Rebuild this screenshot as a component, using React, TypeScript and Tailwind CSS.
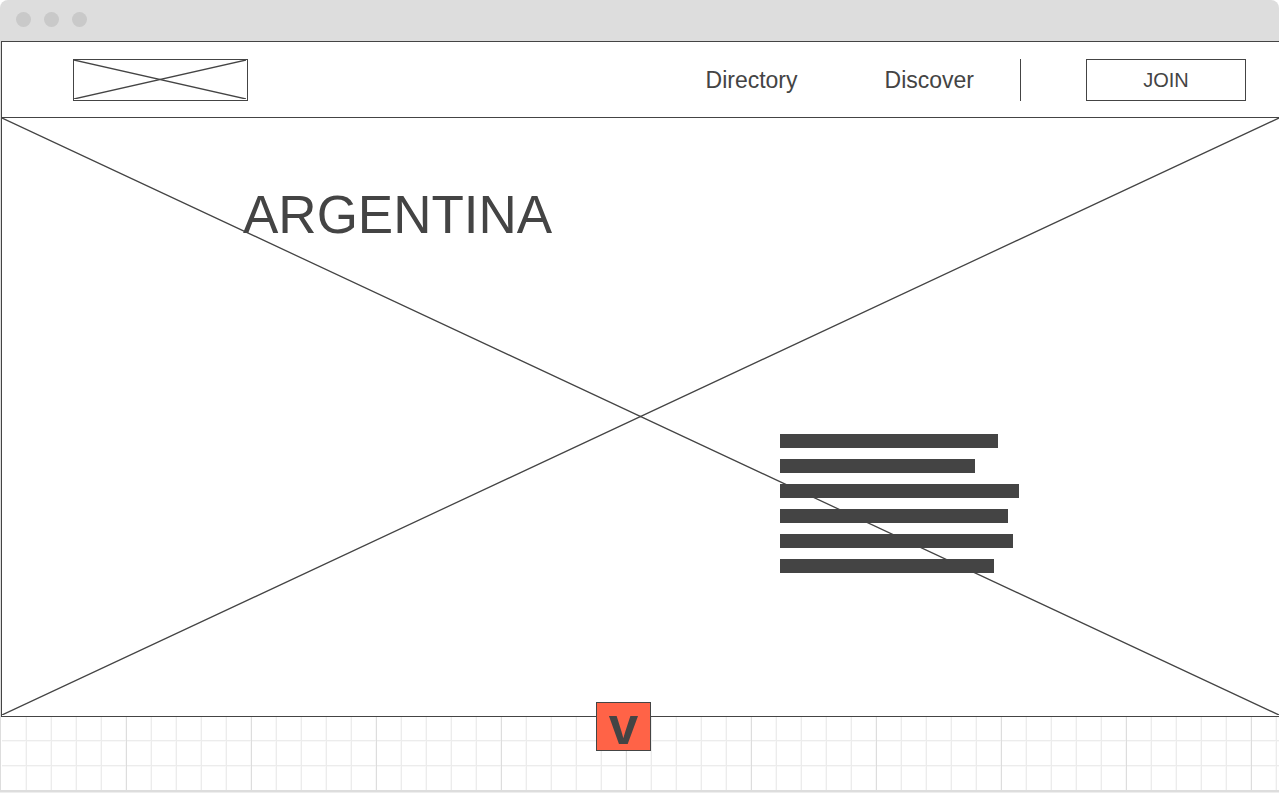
import React from "react";

const bars = [
  "w-[218px]",
  "w-[195px]",
  "w-[239px]",
  "w-[228px]",
  "w-[233px]",
  "w-[214px]",
];

function Cross({ size }: { size: string }) {
  return (
    <svg
      className={`absolute top-0 left-0 ${size}`}
      viewBox="0 0 100 100"
      preserveAspectRatio="none"
      aria-hidden="true"
    >
      <path
        d="M0 0L100 100M0 100L100 0"
        stroke="#444"
        strokeWidth="1.3"
        fill="none"
        vectorEffect="non-scaling-stroke"
      />
    </svg>
  );
}

function Grid() {
  return (
    <svg className="block h-[73px] w-full" aria-hidden="true">
      <defs>
        <pattern id="minor" width="25" height="25" x="0" y="-2" patternUnits="userSpaceOnUse">
          <path d="M24 0h1v25h-1zM0 1h25v1h-25z" fill="#f8f8f8" />
          <path d="M0 0h1v25h-1zM0 0h25v1h-25z" fill="#ececec" />
        </pattern>
        <pattern id="major" width="125" height="125" x="0" y="-2" patternUnits="userSpaceOnUse">
          <path d="M0 0h1v125h-1z" fill="#ddd" />
        </pattern>
      </defs>
      <rect x="1" width="100%" height="100%" fill="url(#minor)" />
      <rect x="1" width="100%" height="100%" fill="url(#major)" />
    </svg>
  );
}

export default function App() {
  return (
    <div className="overflow-hidden bg-white font-['Liberation_Sans',Arial,sans-serif] text-[#444]">
      <div className="flex h-[41px] items-center gap-[13px] rounded-t-lg bg-[#ddd] px-4 pb-0.5">
        <span className="size-[15px] rounded-full bg-[#c9c9c9]" />
        <span className="size-[15px] rounded-full bg-[#c9c9c9]" />
        <span className="size-[15px] rounded-full bg-[#c9c9c9]" />
      </div>
      <div className="border-b-2 border-l border-[#ddd]">
        <header className="flex h-[77px] items-center border-y border-l border-[#444] pr-[33px] pl-[71px]">
          <a
            href="#home"
            aria-label="Home"
            className="relative h-[42px] w-[175px] border border-[#444]"
          >
            <Cross size="h-[calc(100%-1px)] w-[calc(100%-1px)]" />
          </a>
          <nav className="ml-auto flex items-center text-[23px] leading-7">
            <a href="#directory">Directory</a>
            <a href="#discover" className="ml-[87px]">Discover</a>
          </nav>
          <span className="ml-[46px] h-[42px] w-px bg-[#444]" />
          <button className="ml-[65px] h-[42px] w-[160px] border border-[#444] text-xl">
            JOIN
          </button>
        </header>
        <main className="relative h-[599px] border-b border-l border-[#444]">
          <Cross size="h-[calc(100%-1px)] w-full" />
          <div className="relative flex h-full flex-col pt-[67px]">
            <h1 className="pl-[241px] text-[53px] leading-[60px]">ARGENTINA</h1>
            <div className="mt-[189px] ml-[778px] flex flex-col gap-[11px]">
              {bars.map((width) => (
                <span key={width} className={`h-3.5 bg-[#444] ${width}`} />
              ))}
            </div>
          </div>
          <button className="absolute -bottom-[35px] left-[594px] z-10 flex h-[49px] w-[55px] items-center justify-center border border-[#444] bg-[#ff6347] pb-0.5 text-[53px] leading-[46px] font-bold">
            v
          </button>
        </main>
        <Grid />
      </div>
      <div className="h-0.5 bg-[#eee]" />
    </div>
  );
}
